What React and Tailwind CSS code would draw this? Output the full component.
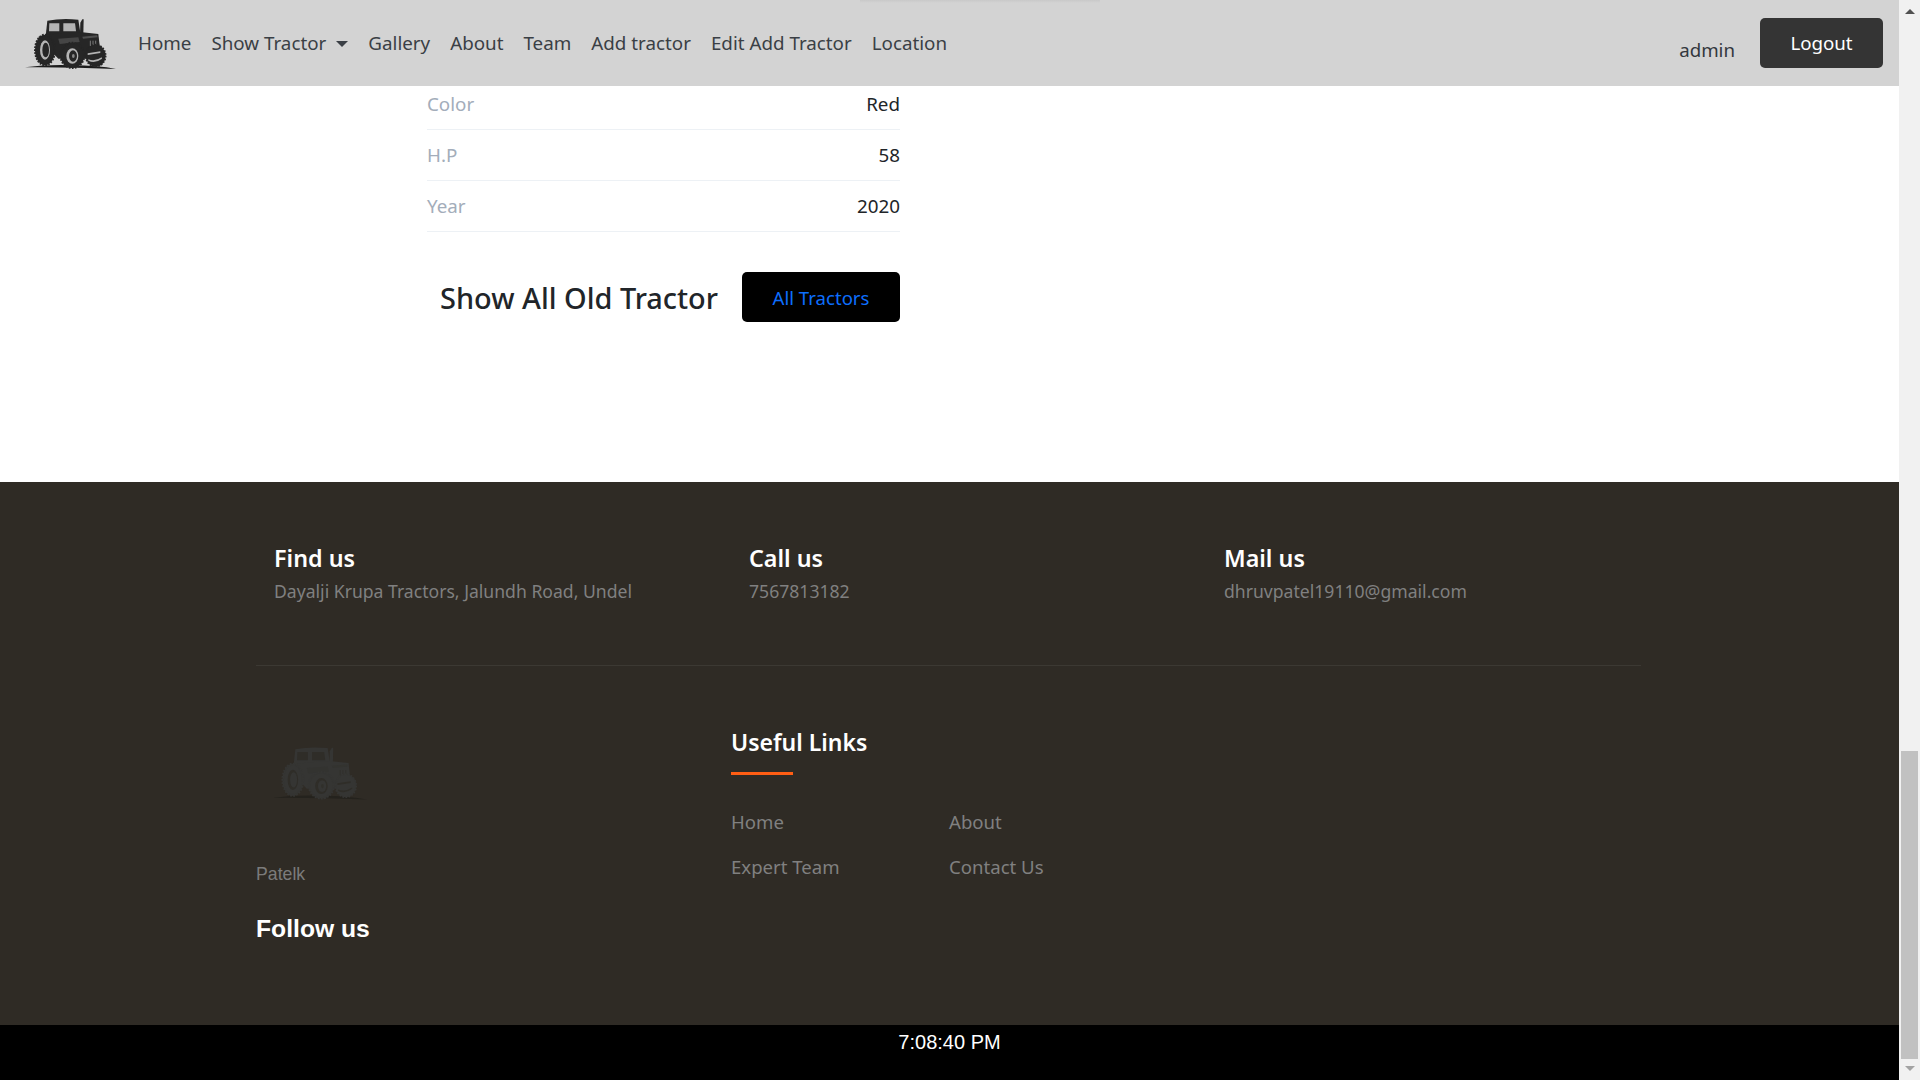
import React from 'react';

const navLinks = ['Home', 'Show Tractor', 'Gallery', 'About', 'Team', 'Add tractor', 'Edit Add Tractor', 'Location'];

const specs = [
  { label: 'Color', value: 'Red', rowClass: 'h-[44px] pb-[6px]' },
  { label: 'H.P', value: '58', rowClass: 'h-[51px]' },
  { label: 'Year', value: '2020', rowClass: 'h-[51px]' },
];

const contacts = [
  { title: 'Find us', text: 'Dayalji Krupa Tractors, Jalundh Road, Undel' },
  { title: 'Call us', text: '7567813182' },
  { title: 'Mail us', text: 'dhruvpatel19110@gmail.com' },
];

function TractorLogo({ className, body, light, ground }) {
  return (
    <svg viewBox="0 0 273 153" className={className}>
      {/* ground */}
      <path d="M0 148 Q70 139 140 142 Q220 142 273 153 Q140 147 0 148Z" fill={ground} />
      {/* exhaust */}
      <path d="M165 48 L166 14 L172 4 L176 4 L175 48Z" fill={body} />
      {/* cab */}
      <path d="M67 8 Q110 0 160 5 L167 50 L62 54Z" fill={body} />
      <path d="M73 16 L103 16 L103 40 L72 40Z" fill={light} />
      <path d="M115 16 L150 16 L153 40 L115 40Z" fill={light} />
      {/* body and hood */}
      <path d="M40 56 L100 46 L165 42 L220 48 L226 100 L185 122 L100 122 L60 80Z" fill={body} />
      <path d="M172 56 L216 52 L218 58 L174 62Z" fill={light} opacity="0.3" />
      <path d="M196 68 L196 84 M204 68 L204 84 M212 68 L212 84" stroke={light} strokeWidth="3" opacity="0.6" />
      <path d="M100 62 L160 58 L164 72 L104 78Z" fill={light} opacity="0.22" />
      {/* rear wheel */}
      <ellipse cx="60" cy="96" rx="30" ry="46" fill={body} stroke={body} strokeWidth="6" strokeDasharray="5 4" />
      <ellipse cx="60" cy="96" rx="26" ry="41" fill={body} />
      <ellipse cx="60" cy="96" rx="15" ry="29" fill={light} />
      <ellipse cx="62" cy="96" rx="10" ry="22" fill={body} />
      {/* middle wheel */}
      <ellipse cx="142" cy="112" rx="36" ry="38" fill={body} stroke={body} strokeWidth="6" strokeDasharray="5 4" />
      <ellipse cx="142" cy="112" rx="32" ry="34" fill={body} />
      <ellipse cx="142" cy="114" rx="18" ry="23" fill={light} />
      <ellipse cx="144" cy="114" rx="12" ry="17" fill={body} />
      <ellipse cx="145" cy="114" rx="4" ry="6" fill={light} opacity="0.7" />
      {/* front wheel */}
      <ellipse cx="212" cy="113" rx="30" ry="33" fill={body} stroke={body} strokeWidth="5" strokeDasharray="5 4" />
      <path d="M188 106 L226 100 L226 105 L188 111Z" fill={light} />
      <path d="M190 124 Q210 132 230 118 L231 122 Q210 138 190 128Z" fill={light} />
    </svg>
  );
}

function Scrollbar() {
  return (
    <div className="w-[21px] h-full shrink-0 bg-[#f1f1f1] flex flex-col items-center">
      <div className="h-[751px] w-full pt-[9px] flex justify-center">
        <div className="w-0 h-0 border-x-[5px] border-x-transparent border-b-[5px] border-b-[#505050]" />
      </div>
      <div className="w-[17px] h-[308px] bg-[#c1c1c1]" />
      <div className="pt-[7px] flex justify-center">
        <div className="w-0 h-0 border-x-[5px] border-x-transparent border-t-[5px] border-t-[#a3a3a3]" />
      </div>
    </div>
  );
}

function Navbar() {
  return (
    <nav className="relative h-[86px] shrink-0 bg-[#d3d3d3] flex items-center pl-[25px] pr-[16px]">
      {/* edge of the menu that sits above the page */}
      <div className="absolute top-0 left-[860px] w-[240px] h-[3px] bg-gradient-to-b from-[#c9c9c9] to-[#d3d3d3]" />
      <TractorLogo className="w-[91px] h-[51px] shrink-0" body="#262626" light="#b4b4b4" ground="#1c1c1c" />
      <ul className="flex items-center ml-[22px] mt-[1px] gap-[20px] text-[18.8px] text-[#3a3f45]">
        {navLinks.map((link) => (
          <li key={link} className="flex items-center">
            {link}
            {link === 'Show Tractor' && (
              <span className="ml-[10px] w-0 h-0 border-x-[6px] border-x-transparent border-t-[6px] border-t-[#3a3f45]" />
            )}
          </li>
        ))}
      </ul>
      <span className="ml-auto mt-[14px] text-[18.7px] text-[#33383e]">admin</span>
      <button className="ml-[25px] w-[123px] h-[50px] pt-[1px] rounded-[5px] bg-[#343434] text-white text-[18.7px]">Logout</button>
    </nav>
  );
}

function TractorDetails() {
  return (
    <main className="h-[396px] shrink-0 bg-white pl-[427px]">
      <div className="w-[473px]">
        {specs.map((row) => (
          <div key={row.label} className={`${row.rowClass} flex items-center justify-between border-b border-[#edf1f5] text-[18.8px]`}>
            <span className="text-[#a3adba]">{row.label}</span>
            <span className="text-[#212529]">{row.value}</span>
          </div>
        ))}
        <div className="mt-[40px] flex items-center justify-end">
          <h2 className="mt-[1px] text-[28.9px] font-medium text-[#212529]">Show All Old Tractor</h2>
          <button className="ml-[24px] w-[158px] h-[50px] pt-[1px] rounded-[5px] bg-black text-[#0d6efd] text-[18.6px]">All Tractors</button>
        </div>
      </div>
    </main>
  );
}

function Footer() {
  return (
    <footer className="flex-1 bg-[#2f2b25] pl-[256px]">
      <div className="w-[1385px]">
        <div className="h-[184px] border-b border-[#3c3933] grid grid-cols-[475px_475px_435px] pl-[18px] pt-[58px]">
          {contacts.map((c) => (
            <div key={c.title}>
              <h4 className="text-[23.3px] leading-[36px] font-semibold text-white">{c.title}</h4>
              <p className="text-[17.6px] leading-[30px] text-[#808080]">{c.text}</p>
            </div>
          ))}
        </div>
        <div className="grid grid-cols-[475px_1fr]">
          <div>
            <TractorLogo className="ml-[16px] mt-[80px] w-[95px] h-[54px]" body="#353533" light="#2f2d28" ground="#24221d" />
            <p className="mt-[62px] font-['Liberation_Sans',sans-serif] text-[17.7px] leading-[24px] text-[#7b7b7b]">Patelk</p>
            <h3 className="mt-[25px] font-['Liberation_Sans',sans-serif] text-[24.7px] leading-[36px] font-bold text-white">Follow us</h3>
          </div>
          <div className="pt-[58px]">
            <h3 className="text-[23px] leading-[36px] font-semibold text-white">Useful Links</h3>
            <div className="mt-[12px] w-[62px] h-[3px] bg-[#ff5e14]" />
            <div className="mt-[32px] grid grid-cols-[218px_218px] gap-y-[15px] text-[18.6px] leading-[30px] text-[#808080]">
              <span>Home</span>
              <span>About</span>
              <span>Expert Team</span>
              <span>Contact Us</span>
            </div>
          </div>
        </div>
      </div>
    </footer>
  );
}

export default function App() {
  return (
    <div className="w-[1920px] h-[1080px] overflow-hidden flex font-['Noto_Sans',sans-serif]">
      <div className="flex-1 flex flex-col min-w-0">
        <Navbar />
        <TractorDetails />
        <Footer />
        <div className="h-[55px] shrink-0 bg-black text-white text-center font-['Liberation_Sans',sans-serif] text-[20px] leading-[34px]">
          7:08:40 PM
        </div>
      </div>
      <Scrollbar />
    </div>
  );
}
